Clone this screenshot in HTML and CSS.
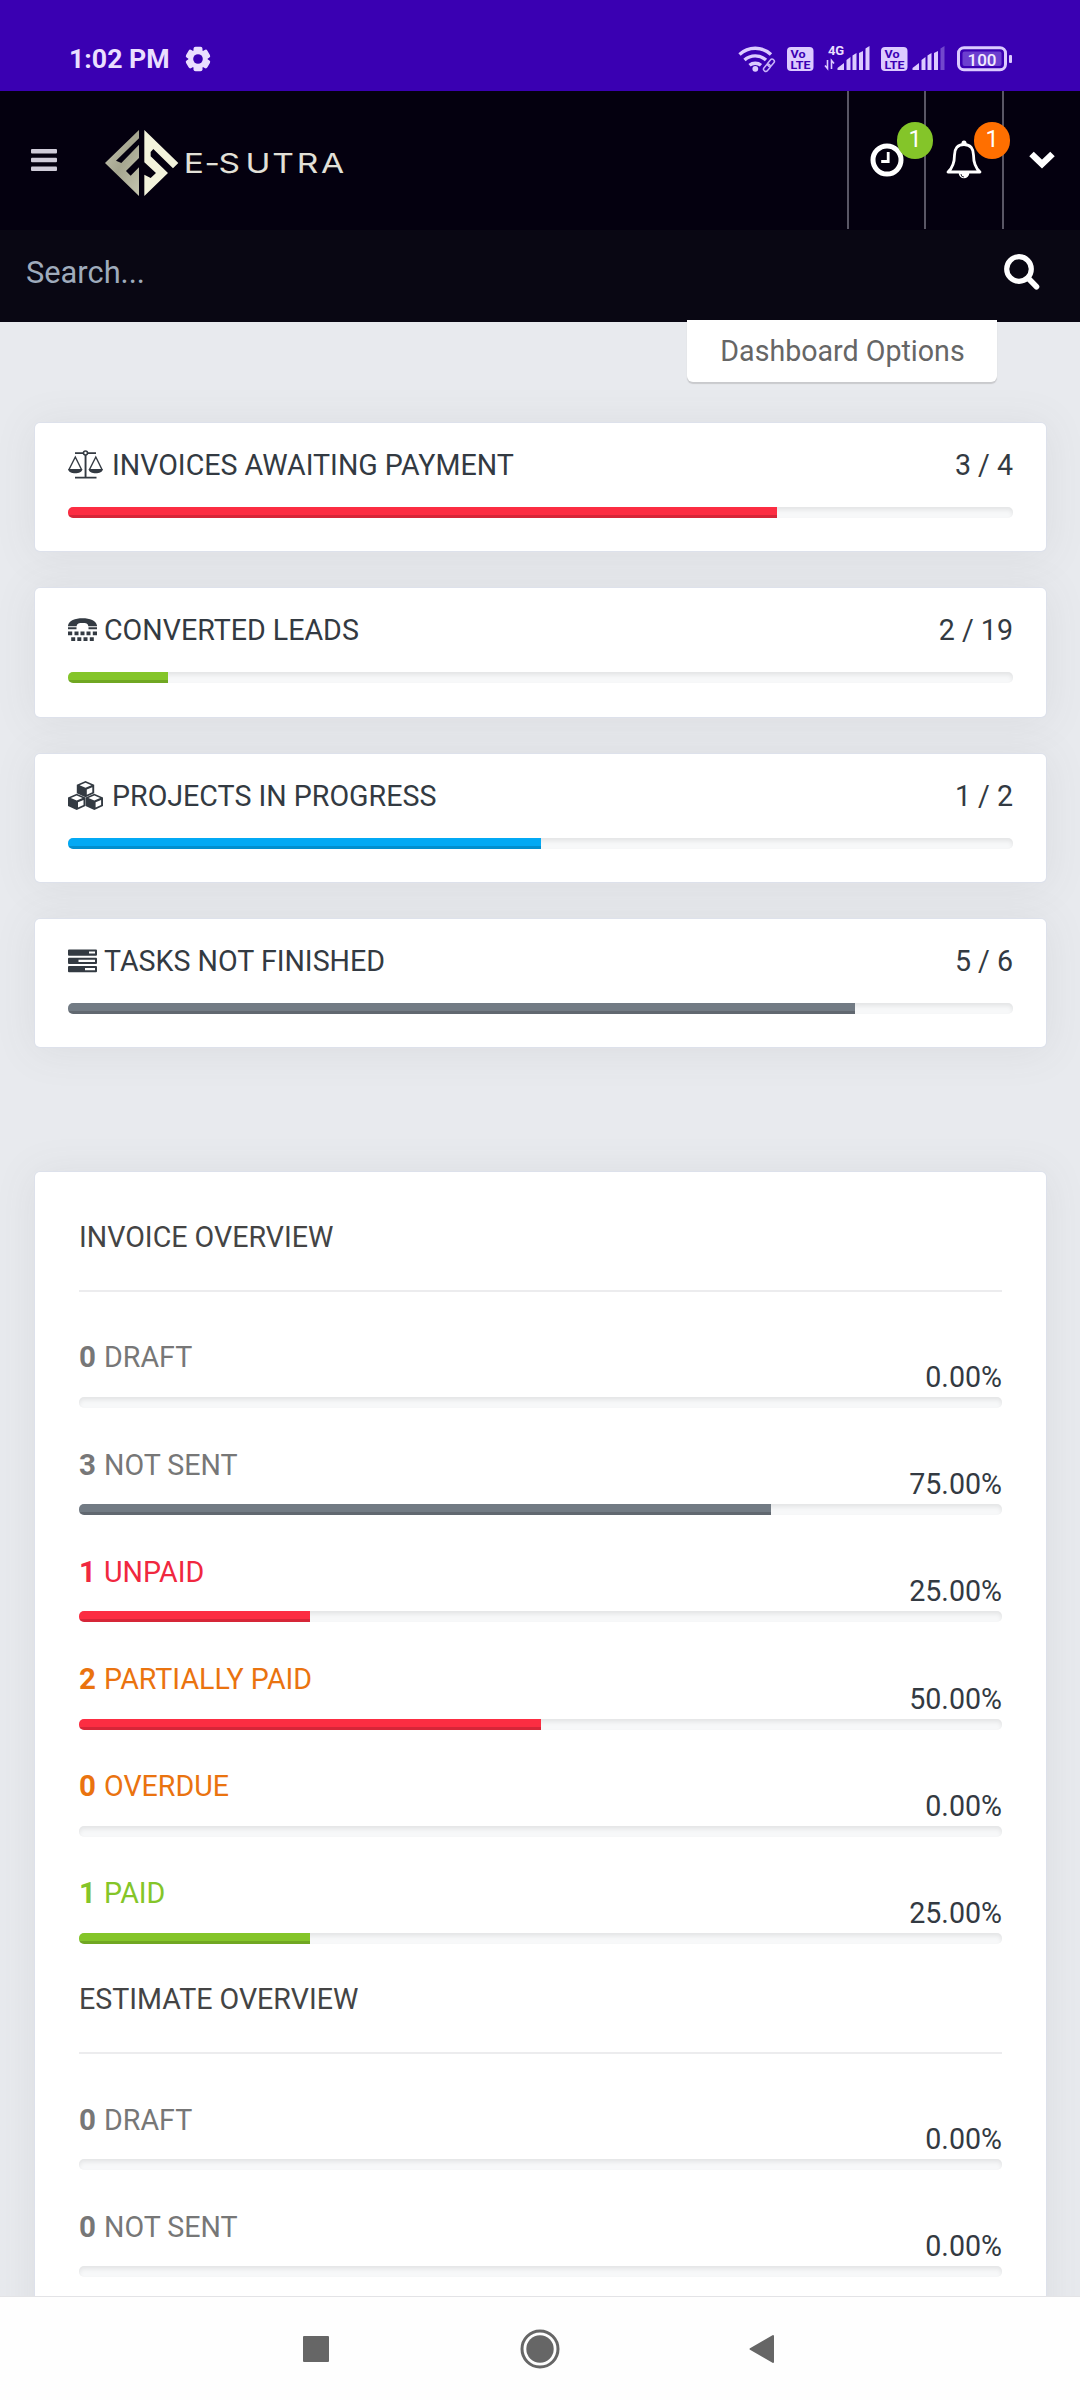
FILE: index.html
```html
<!DOCTYPE html>
<html lang="en">

<head>
    <meta charset="UTF-8" />
    <meta name="viewport" content="width=device-width, initial-scale=1.0" />
    <title>E-SUTRA Dashboard</title>
    <link rel="stylesheet" href="styles.css">
</head>

<body>
    <div class="status-bar">
        <div class="status-left">
            <span class="clock">1:02 PM</span>
            <svg width="26" height="26" viewBox="-13 -13 26 26">
                <g fill="#eadfff">
                    <rect x="-4.5" y="-12.3" width="9" height="24.6" rx="2" />
                    <rect x="-4.5" y="-12.3" width="9" height="24.6" rx="2" transform="rotate(60)" />
                    <rect x="-4.5" y="-12.3" width="9" height="24.6" rx="2" transform="rotate(120)" />
                    <circle r="9.6" />
                </g>
                <circle r="4.8" fill="#3a00b2" />
            </svg>
        </div>
        <svg class="status-icons" width="276" height="32" viewBox="736 42 276 32">
            <!-- wifi -->
            <g fill="none" stroke="#dccbff" stroke-width="3.4">
                <path d="M739.5 54.5a23 23 0 0 1 31.5 0" />
                <path d="M744.5 60a16 16 0 0 1 21.5 0" />
                <path d="M749.5 65.3a9 9 0 0 1 11.5 0" />
            </g>
            <circle cx="755.3" cy="68.8" r="2.9" fill="#dccbff" />
            <g fill="none" stroke="#c9b3fa" stroke-width="1.5">
                <rect x="763" y="65.5" width="8" height="4.5" rx="2.2" transform="rotate(-50 767 67.8)" />
                <rect x="767" y="60.5" width="8" height="4.5" rx="2.2" transform="rotate(-50 771 62.8)" />
            </g>
            <!-- sim 1 -->
            <rect x="787" y="47" width="26.5" height="24" rx="4" fill="#dccbff" />
            <text class="volte" x="790.5" y="57.5" textLength="15" lengthAdjust="spacingAndGlyphs">Vo</text>
            <text class="volte" x="790.5" y="68.5" textLength="20" lengthAdjust="spacingAndGlyphs">LTE</text>
            <text class="net" x="828" y="54.8" textLength="16">4G</text>
            <path d="M827.5 60v8.5l-2.5-3M831.5 69v-8.5l2.5 3" fill="none" stroke="#dccbff" stroke-width="1.6" />
            <path d="M837.5 70v-2l6.5-5v7zM846.5 70v-10l4-3v13zM852.5 70v-14.5l4-2.5v17zM859 70v-17l4-2v19zM865.5 70v-21.5l4-2.5v24z" fill="#dccbff" />
            <!-- sim 2 -->
            <rect x="881" y="47" width="26.5" height="24" rx="4" fill="#dccbff" />
            <text class="volte" x="884.5" y="57.5" textLength="15" lengthAdjust="spacingAndGlyphs">Vo</text>
            <text class="volte" x="884.5" y="68.5" textLength="20" lengthAdjust="spacingAndGlyphs">LTE</text>
            <g fill="#dccbff">
                <path d="M912.5 70v-2l6.5-5v7zM921.5 70v-10l4-3v13zM927.5 70v-14.5l4-2.5v17zM934 70v-17l4-2v19z" />
                <path d="M940.5 70v-21.5l4-2.5v24z" opacity="0.35" />
            </g>
            <!-- battery -->
            <rect x="958.5" y="47.7" width="47" height="22" rx="5.5" fill="none" stroke="#dccbff" stroke-width="3" />
            <rect x="962.5" y="51.5" width="39" height="14.5" rx="2" fill="#6c3fcf" />
            <rect x="1009" y="55" width="3" height="8" rx="1" fill="#dccbff" />
            <text class="battery-text" x="967.5" y="65.8" textLength="29">100</text>
        </svg>
    </div>

    <header class="header">
        <div class="brand">
            <svg class="burger" width="26" height="22" viewBox="0 0 26 22" fill="#cfcbd8">
                <rect y="0" width="26" height="4.5" rx="1" />
                <rect y="8.7" width="26" height="4.5" rx="1" />
                <rect y="17.4" width="26" height="4.5" rx="1" />
            </svg>
            <svg class="logo" width="250" height="78" viewBox="0 0 250 78">
                <defs>
                    <linearGradient id="silver" x1="0" y1="0" x2="1" y2="1">
                        <stop offset="0" stop-color="#c9c9b5" />
                        <stop offset="0.5" stop-color="#a5a58f" />
                        <stop offset="1" stop-color="#c6c6b0" />
                    </linearGradient>
                </defs>
                <g transform="scale(0.3333)">
                    <path fill="url(#silver)" d="M117 18L15 117l102 99v-86l-25 25-14-14 39-39V62l-53 55-16-7 69-67z" />
                    <path fill="#f3f3dc" d="M133 18l102 99-16 16-59-58-8 9v13l52 50-71 69v-64l19 10 16-15-35-32z" />
                </g>
                <text class="logo-text" transform="translate(85 49) scale(1.22 1)" x="-1 16 27.5 49.5 71.5 91.5 111.5" y="0">E-SUTRA</text>
            </svg>
        </div>
        <div class="nav-icons">
            <div class="nav-cell">
                <svg width="34" height="34" viewBox="0 0 34 34" fill="none" stroke="#fff">
                    <circle cx="17" cy="17" r="14" stroke-width="5" />
                    <path d="M18.2 9v9.5h-7" stroke-width="2.8" />
                </svg>
                <span class="badge badge-green">1</span>
            </div>
            <div class="nav-cell">
                <svg width="36" height="40" viewBox="0 0 36 40" fill="none" stroke="#fff">
                    <path d="M18 4.5c-7 0-9.5 5-9.5 10.5 0 8-2 13-6.5 17h32c-4.500-4-6.500-9-6.500-17C27.500 9.500 25 4.500 18 4.500z" stroke-width="2.8" stroke-linejoin="round" />
                    <circle cx="18" cy="3" r="2.5" fill="#fff" stroke="none" />
                    <path d="M12.7 33h10.6a5.3 5.3 0 0 1-10.6 0z" fill="#fff" stroke="none" />
                    <path d="M15 34a3 3 0 0 0 3 3" stroke="#04000f" stroke-width="0.8" />
                </svg>
                <span class="badge badge-orange">1</span>
            </div>
            <div class="nav-cell">
                <svg width="28" height="20" viewBox="0 0 28 20">
                    <path d="M3.5 4L14 14l10.5-10" fill="none" stroke="#fff" stroke-width="6.5" />
                </svg>
            </div>
        </div>
    </header>

    <div class="search">
        <span>Search...</span>
        <svg width="36" height="36" viewBox="0 0 36 36" fill="none" stroke="#fff">
            <circle cx="15" cy="15" r="12.3" stroke-width="5.2" />
            <path d="M24.5 24.5l8 8.3" stroke-width="5.6" stroke-linecap="round" />
        </svg>
    </div>

    <div class="content">
        <div class="options">Dashboard Options</div>

        <div class="stats">
            <div class="stat">
                <div class="stat-head">
                    <svg class="wide" width="35" height="30" viewBox="0 0 35 30" fill="#333a42">
                        <path d="M7 2.2h21V4H7zM16.6 4h1.900v23h-1.900zM7 26.800h21.500v1.800H7zM0 19h14.500c-.5 3-3.500 4.200-7.200 4.200S.5 22 0 19zM20.500 19H35c-.5 3-3.500 4.200-7.200 4.200S21 22 20.500 19z" />
                        <path d="M1 19.5L7.3 7l6.2 12.5M21.5 19.5L27.800 7 34 19.5" fill="none" stroke="#333a42" stroke-width="1.4" />
                        <circle cx="17.5" cy="3" r="2" fill="#fff" stroke="#333a42" stroke-width="1.6" />
                    </svg>
                    <span class="stat-title">INVOICES AWAITING PAYMENT</span>
                    <span class="stat-count">3 / 4</span>
                </div>
                <div class="progress"><div class="bar danger" style="width: 75%"></div></div>
            </div>

            <div class="stat">
                <div class="stat-head">
                    <svg width="29" height="24" viewBox="0 0 29 24" fill="#333a42">
                        <path d="M0 7.5C1 2.500 7 .3 14.500.3S28 2.500 29 7.500v.8h-8.700C20 5.500 18 5 14.500 5s-5.500.5-5.800 3.300H0zM0 9.300h8.500v1.900H0zM20.500 9.300H29v1.900h-8.500z" />
                        <path d="M0 13.5h4.200v3.800H0zM6.500 13.500h4v3.800h-4zM12.500 13.500h4v3.800h-4zM18.500 13.500h4v3.800h-4zM24.800 13.500H29v3.800h-4.200zM3.200 19.300h4v3.800h-4zM9.300 19.300h4v3.800h-4zM15.500 19.300h4v3.800h-4zM21.800 19.300h4v3.800h-4z" />
                    </svg>
                    <span class="stat-title">CONVERTED LEADS</span>
                    <span class="stat-count">2 / 19</span>
                </div>
                <div class="progress"><div class="bar success" style="width: 10.53%"></div></div>
            </div>

            <div class="stat">
                <div class="stat-head">
                    <svg class="wide" width="35" height="30" viewBox="0 0 35 30">
                        <defs>
                            <g id="cube">
                                <path d="M0 3.8L8.7 0l8.700 3.800v8.400L8.700 16.300 0 12.200z" fill="#333a42" />
                                <path d="M2.8 4.2l5.900-2.500 5.900 2.500-5.900 2.500zM10 8.500l5.500-2.300v5L10 13.700z" fill="#fff" />
                            </g>
                        </defs>
                        <use href="#cube" x="8.8" y="0" />
                        <use href="#cube" x="0" y="12.7" />
                        <use href="#cube" x="17.6" y="12.7" />
                    </svg>
                    <span class="stat-title">PROJECTS IN PROGRESS</span>
                    <span class="stat-count">1 / 2</span>
                </div>
                <div class="progress"><div class="bar info" style="width: 50%"></div></div>
            </div>

            <div class="stat">
                <div class="stat-head">
                    <svg width="29" height="24" viewBox="0 0 29 24">
                        <path d="M1 .5h27q1 0 1 1v4.200q0 1-1 1H1q-1 0-1-1V1.500q0-1 1-1zM1 8.800h27q1 0 1 1V14q0 1-1 1H1q-1 0-1-1V9.800q0-1 1-1zM1 17.100h27q1 0 1 1v4.200q0 1-1 1H1q-1 0-1-1v-4.200q0-1 1-1z" fill="#333a42" />
                        <path d="M21 2.500h6v2.100h-6zM10.500 10.800H27v2.100H10.500zM17 19.100h10v2.100H17z" fill="#fff" />
                    </svg>
                    <span class="stat-title">TASKS NOT FINISHED</span>
                    <span class="stat-count">5 / 6</span>
                </div>
                <div class="progress"><div class="bar default" style="width: 83.33%"></div></div>
            </div>
        </div>

        <div class="panel">
            <h2>INVOICE OVERVIEW</h2>
            <hr>
            <div class="row">
                <div class="row-head">
                    <span class="label muted"><b>0</b> DRAFT</span>
                    <span class="percent">0.00%</span>
                </div>
                <div class="progress"></div>
            </div>
            <div class="row">
                <div class="row-head">
                    <span class="label muted"><b>3</b> NOT SENT</span>
                    <span class="percent">75.00%</span>
                </div>
                <div class="progress"><div class="bar default" style="width: 75%"></div></div>
            </div>
            <div class="row">
                <div class="row-head">
                    <span class="label red"><b>1</b> UNPAID</span>
                    <span class="percent">25.00%</span>
                </div>
                <div class="progress"><div class="bar danger" style="width: 25%"></div></div>
            </div>
            <div class="row">
                <div class="row-head">
                    <span class="label orange"><b>2</b> PARTIALLY PAID</span>
                    <span class="percent">50.00%</span>
                </div>
                <div class="progress"><div class="bar danger" style="width: 50%"></div></div>
            </div>
            <div class="row">
                <div class="row-head">
                    <span class="label orange"><b>0</b> OVERDUE</span>
                    <span class="percent">0.00%</span>
                </div>
                <div class="progress"></div>
            </div>
            <div class="row">
                <div class="row-head">
                    <span class="label green"><b>1</b> PAID</span>
                    <span class="percent">25.00%</span>
                </div>
                <div class="progress"><div class="bar success" style="width: 25%"></div></div>
            </div>

            <h2 class="second">ESTIMATE OVERVIEW</h2>
            <hr>
            <div class="row">
                <div class="row-head">
                    <span class="label muted"><b>0</b> DRAFT</span>
                    <span class="percent">0.00%</span>
                </div>
                <div class="progress"></div>
            </div>
            <div class="row">
                <div class="row-head">
                    <span class="label muted"><b>0</b> NOT SENT</span>
                    <span class="percent">0.00%</span>
                </div>
                <div class="progress"></div>
            </div>
        </div>
    </div>

    <nav class="android-nav">
        <svg width="26" height="26" viewBox="0 0 26 26"><rect width="26" height="26" rx="1" fill="#666" /></svg>
        <svg class="home" width="40" height="40" viewBox="0 0 40 40">
            <circle cx="20" cy="20" r="18" fill="none" stroke="#666" stroke-width="3" />
            <circle cx="20" cy="20" r="13.7" fill="#666" />
        </svg>
        <svg width="26" height="30" viewBox="0 0 26 30"><path d="M1.5 15L24 2v26z" fill="#666" stroke="#666" stroke-width="2" stroke-linejoin="round" /></svg>
    </nav>
</body>

</html>
```

FILE: styles.css
```css
* {
    box-sizing: border-box;
}

body {
    margin: 0;
    height: 2400px;
    overflow: hidden;
    background-color: #e8eaee;
    font-family: Roboto, "Liberation Sans", sans-serif;
    font-size: 28.6px;
    line-height: 32px;
    color: #333a42;
}

svg {
    display: block;
    flex-shrink: 0;
}

/* android status bar */
.status-bar {
    display: flex;
    justify-content: space-between;
    height: 91px;
    padding: 42px 68px 0 69px;
    background-color: #3a00b2;
}

.status-left {
    display: flex;
    align-items: center;
    height: 34px;
    gap: 15px;
}

.clock {
    font-size: 26.7px;
    font-weight: 700;
    color: #eadfff;
}

.volte {
    font-size: 11.5px;
    font-weight: 700;
    fill: #3a00b2;
}

.net {
    font-size: 13px;
    font-weight: 700;
    fill: #eadfff;
}

.battery-text {
    font-size: 17px;
    font-weight: 500;
    fill: #f3ecff;
}

/* header */
.header {
    display: flex;
    justify-content: space-between;
    height: 139px;
    background-color: #04000f;
}

.brand {
    display: flex;
    align-items: center;
    padding-left: 31px;
    gap: 43px;
}

.burger {
    margin-bottom: 2px;
}

.logo {
    margin-top: 4px;
}

.logo-text {
    font-family: Inter, sans-serif;
    font-size: 27.5px;
    font-weight: 400;
    fill: #e2e0d8;
}

.nav-icons {
    display: grid;
    grid-template-columns: 77px 78px 78px;
}

.nav-cell {
    position: relative;
    display: flex;
    align-items: center;
    justify-content: center;
    height: 138px;
    border-left: 2px solid #595665;
}

.badge {
    position: absolute;
    top: 31px;
    left: 48px;
    width: 36px;
    height: 37px;
    border-radius: 18px;
    font-size: 23.5px;
    line-height: 34px;
    text-align: center;
    color: #fff;
    z-index: 1;
}

.badge-green {
    background-color: #84c529;
}

.badge-orange {
    background-color: #ff6f00;
}

.search {
    display: flex;
    align-items: center;
    justify-content: space-between;
    height: 92px;
    padding: 0 40px 8px 26px;
    background-color: #090713;
    font-size: 30.8px;
    color: #9fabbc;
}

.search span {
    padding-top: 2px;
}

/* page */
.content {
    display: flex;
    flex-direction: column;
    padding: 0 34px 0 35px;
}

.options {
    align-self: flex-end;
    width: 310px;
    height: 62px;
    margin: -2px 49px 41px 0;
    padding-left: 1px;
    border-radius: 0 0 6px 6px;
    background-color: #fff;
    box-shadow: 0 2px 1px #c9cacd;
    line-height: 62px;
    text-align: center;
    color: #666;
}

.stats {
    display: flex;
    flex-direction: column;
    gap: 37px;
}

.stat,
.panel {
    border-radius: 5px;
    background-color: #fff;
    box-shadow: 0 0 0 1px #dde1eb, 0 3px 41px 3px rgba(90, 90, 90, 0.08);
}

.stat {
    height: 128.33px;
    padding: 26px 33px 0;
}

.stat-head {
    display: flex;
    align-items: center;
    gap: 7px;
    height: 32px;
    margin-bottom: 26px;
}

.stat-head .wide {
    margin-right: 2px;
}

.stat-title {
    flex: 1;
}

.progress {
    height: 11px;
    border-radius: 5px;
    overflow: hidden;
    background-color: #f7f8f9;
    box-shadow: inset 0 3px 4px rgba(0, 0, 0, 0.08);
}

.bar {
    height: 100%;
    box-shadow: inset 0 -3px 0 rgba(0, 0, 0, 0.15);
}

.danger {
    background-color: #fc2d42;
}

.success {
    background-color: #84c529;
}

.info {
    background-color: #03a9f4;
}

.default {
    background-color: #727b84;
}

/* overview panel */
.panel {
    height: 1300px;
    margin-top: 124.7px;
    padding: 48.5px 44px 0;
}

h2 {
    margin: 0 0 37.5px;
    font-size: 28.6px;
    font-weight: 400;
    color: #444;
}

h2.second {
    margin-top: 38.8px;
}

hr {
    height: 2px;
    margin: 0 0 8.8px;
    border: none;
    background-color: #ececee;
}

.row {
    padding-top: 40.7px;
}

.row-head {
    display: flex;
    justify-content: space-between;
    height: 55.5px;
}

.label b {
    margin-right: 1px;
    font-size: 29.5px;
}

.percent {
    align-self: flex-end;
    padding-bottom: 4px;
}

.muted {
    color: #777;
}

.red {
    color: #f0283f;
}

.orange {
    color: #ea730f;
}

.green {
    color: #84c529;
}

/* android navigation */
.android-nav {
    position: fixed;
    left: 0;
    right: 0;
    bottom: 0;
    display: flex;
    align-items: center;
    justify-content: space-between;
    height: 104px;
    padding: 0 305px 0 303px;
    border-top: 1px solid #e3e3e6;
    background-color: #fefefe;
}

.home {
    margin-left: 2px;
}
```
